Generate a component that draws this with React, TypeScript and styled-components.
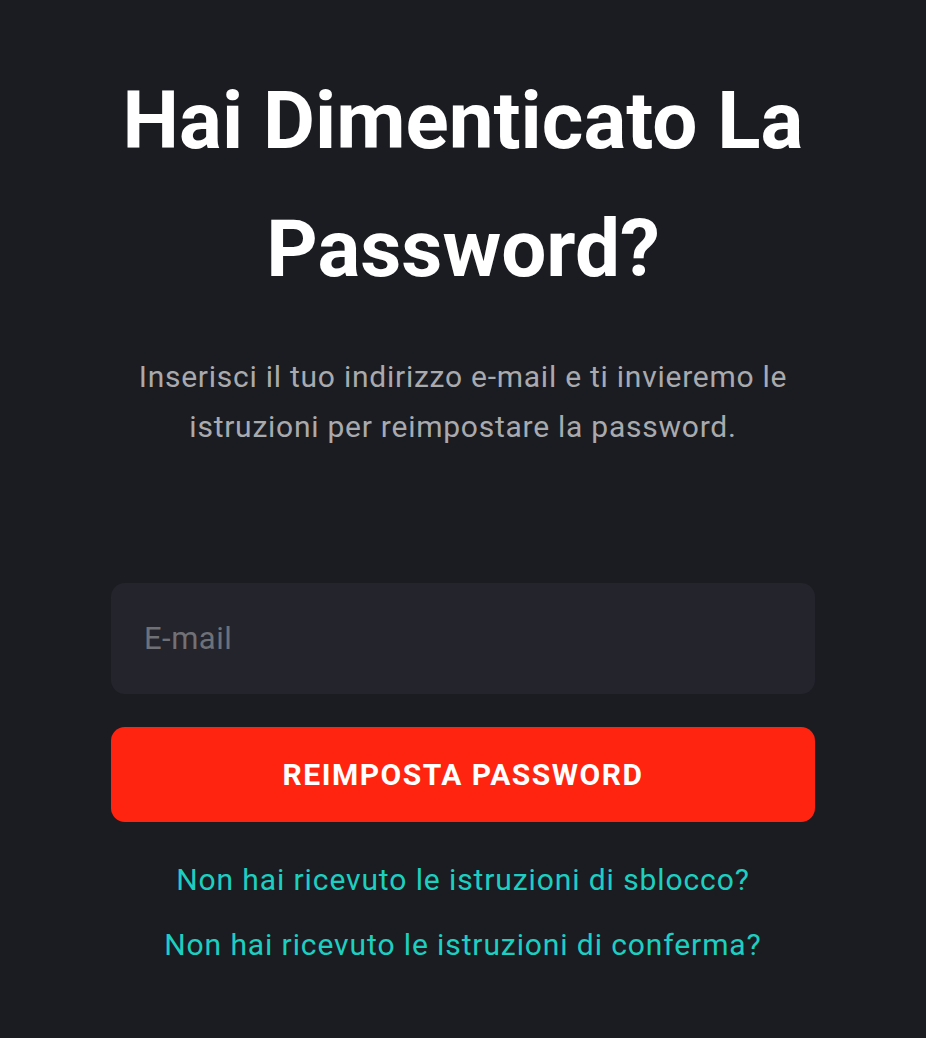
import React from 'react';
import styled, { createGlobalStyle } from 'styled-components';

const GlobalStyle = createGlobalStyle`
  html, body {
    margin: 0;
    padding: 0;
    background: #1b1c22;
  }

  * {
    box-sizing: border-box;
  }
`;

const ForgotPasswordPage: React.FC = () => {
  return (
    <Page>
      <GlobalStyle />
      <Card>
        <Title>Hai Dimenticato La Password?</Title>
        <Subtitle>
          Inserisci il tuo indirizzo e-mail e ti invieremo le istruzioni per
          reimpostare la password.
        </Subtitle>
        <Form onSubmit={(e) => e.preventDefault()}>
          <EmailInput type="email" placeholder="E-mail" />
          <SubmitButton type="submit">REIMPOSTA PASSWORD</SubmitButton>
        </Form>
        <LinkList>
          <HelpLink href="#">Non hai ricevuto le istruzioni di sblocco?</HelpLink>
          <HelpLink href="#">Non hai ricevuto le istruzioni di conferma?</HelpLink>
        </LinkList>
      </Card>
    </Page>
  );
};

export default ForgotPasswordPage;

const Page = styled.div`
  min-height: 1038px;
  width: 100%;
  padding-top: 57px;
  background: #1b1c22;

  font-family: Roboto, 'Liberation Sans', sans-serif;

  display: flex;
  justify-content: center;
`;

const Card = styled.div`
  width: 704px;

  display: flex;
  flex-direction: column;
  align-items: center;
`;

const Title = styled.h1`
  margin: 0;

  font-weight: 700;
  font-size: 80px;
  line-height: 128px;
  text-align: center;
  color: #ffffff;
`;

const Subtitle = styled.p`
  margin: 39px 0 0;

  font-weight: 400;
  font-size: 30px;
  line-height: 50px;
  letter-spacing: 0.75px;
  text-align: center;
  color: #a9aaae;
`;

const Form = styled.form`
  margin-top: 131px;
  width: 100%;

  display: flex;
  flex-direction: column;
  gap: 33px;
`;

const EmailInput = styled.input`
  width: 100%;
  height: 111px;
  padding: 0 33px;

  border: none;
  border-radius: 14px;
  outline: none;
  background: #23242c;

  font-family: Roboto, 'Liberation Sans', sans-serif;
  font-size: 31px;
  letter-spacing: 0.5px;
  color: #ffffff;

  &::placeholder {
    color: #707177;
  }
`;

const SubmitButton = styled.button`
  width: 100%;
  height: 95px;

  border: none;
  border-radius: 14px;
  background: #ff2410;
  cursor: pointer;

  font-family: Roboto, 'Liberation Sans', sans-serif;
  font-weight: 700;
  font-size: 30px;
  letter-spacing: 1.5px;
  color: #ffffff;
`;

const LinkList = styled.div`
  margin-top: 37px;

  display: flex;
  flex-direction: column;
  align-items: center;
  gap: 23px;
`;

const HelpLink = styled.a`
  font-size: 30px;
  line-height: 42px;
  letter-spacing: 0.9px;
  text-decoration: none;
  color: #1dcfc1;
`;
